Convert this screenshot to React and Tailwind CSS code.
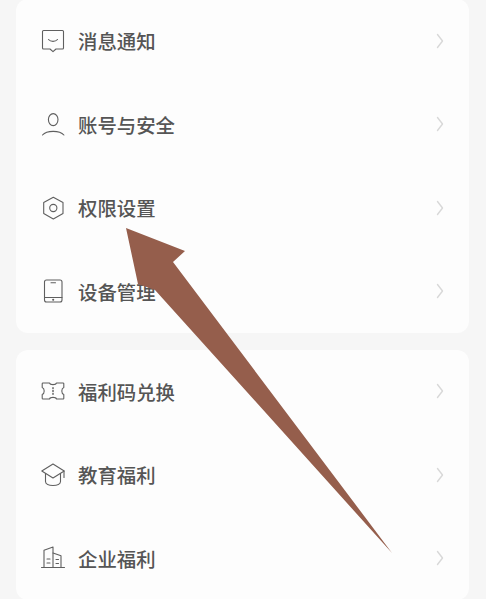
import React from 'react';

const Icon = ({ children }) => (
  <svg width="24" height="24" viewBox="0 0 24 24" fill="none" stroke="#5f5f5f" strokeWidth="1.1" strokeLinejoin="round" strokeLinecap="round" className="shrink-0">
    {children}
  </svg>
);

const MessageIcon = () => (
  <Icon>
    <path d="M2.500 1.500h19a1 1 0 0 1 1 1v16.500a1 1 0 0 1-1 1h-6.500l-3 2.700-3-2.700H2.500a1 1 0 0 1-1-1V2.500a1 1 0 0 1 1-1z" />
    <path d="M7.500 10.500c1.100 1.300 2.700 1.900 4.500 1.900s3.400-.6 4.500-1.900" />
  </Icon>
);

const UserIcon = () => (
  <Icon>
    <ellipse cx="12.200" cy="7.600" rx="4.800" ry="6" />
    <path d="M1.500 23c2.300-2.600 6-3.600 10.700-3.600s8.400 1 10.700 3.600" />
  </Icon>
);

const HexIcon = () => (
  <Icon>
    <path d="M12.300 1.200l9.700 5.400v10.900l-9.700 5.400-9.600-5.400V6.600z" />
    <circle cx="12.300" cy="12" r="3.600" />
  </Icon>
);

const TabletIcon = () => (
  <Icon>
    <rect x="3.500" y="1" width="17.500" height="22" rx="2" />
    <path d="M3.500 18.500h17.500M10 3.700h4.500" />
    <circle cx="12.200" cy="20.800" r=".5" fill="#5f5f5f" />
  </Icon>
);

const TicketIcon = () => (
  <Icon>
    <path d="M2 4h6.500c.3 1 1.700 1.600 3.500 1.600s3.200-.6 3.500-1.600H22a.8.8 0 0 1 .8.8v3.700c-1.300.5-2 1.900-2 3.500s.7 3 2 3.500v3.700a.8.8 0 0 1-.8.8h-6.500c-.3-1-1.700-1.600-3.500-1.600s-3.200.6-3.500 1.600H2a.8.8 0 0 1-.8-.8v-3.700c1.300-.5 2-1.900 2-3.500s-.7-3-2-3.500V4.800A.8.8 0 0 1 2 4z" />
    <path d="M12 8.800v.8M12 11.600v.8M12 14.400v.8" strokeWidth="1.500" />
  </Icon>
);

const CapIcon = () => (
  <Icon>
    <path d="M12 1L.8 8 12 15l11.200-7z" />
    <path d="M4.500 10.500v8c0 2.400 3.300 4 7.500 4s7.500-1.600 7.500-4v-8" />
    <path d="M23 8v6.500" />
  </Icon>
);

const BuildingIcon = () => (
  <Icon>
    <path d="M.5 21.500h23" />
    <path d="M3 21.500V4.200L12 1v20.500" />
    <path d="M12 7l8 2.700v11.800" />
    <path d="M6 13h3M6 17h3M15 13.500h2.500M15 17.500h2.500" />
  </Icon>
);

const Chevron = () => (
  <svg width="8" height="16" viewBox="0 0 8 16" fill="none" stroke="#d8d8d8" strokeWidth="1.400" strokeLinecap="round" strokeLinejoin="round" className="shrink-0">
    <path d="M1.500 1.500L6.500 8l-5 6.500" />
  </svg>
);

const Row = ({ icon, label }) => (
  <div className="flex h-[83.5px] items-center pl-[25px] pr-[25px]">
    {icon}
    <span className="ml-[13px] flex-1 text-[19.400px] font-medium leading-none text-[#555555]">{label}</span>
    <Chevron />
  </div>
);

export default function App() {
  return (
    <div className="relative h-[599px] w-[486px] overflow-hidden bg-[#f6f6f6] font-['Noto_Sans_CJK_SC','Liberation_Sans',sans-serif]">
      <div className="-mt-px flex flex-col gap-[16.500px] pl-[16px] pr-[17px]">
        <div className="rounded-[12px] bg-[#fdfdfd]">
          <Row icon={<MessageIcon />} label="消息通知" />
          <Row icon={<UserIcon />} label="账号与安全" />
          <Row icon={<HexIcon />} label="权限设置" />
          <Row icon={<TabletIcon />} label="设备管理" />
        </div>
        <div className="rounded-[12px] bg-[#fdfdfd]">
          <Row icon={<TicketIcon />} label="福利码兑换" />
          <Row icon={<CapIcon />} label="教育福利" />
          <Row icon={<BuildingIcon />} label="企业福利" />
        </div>
      </div>
      {/* стрелка поверх скриншота */}
      <svg width="486" height="599" viewBox="0 0 486 599" className="absolute left-0 top-0">
        <polygon points="126,228 185,251 173,262 392,553 155,290 138,284" fill="#955e4c" />
      </svg>
    </div>
  );
}
